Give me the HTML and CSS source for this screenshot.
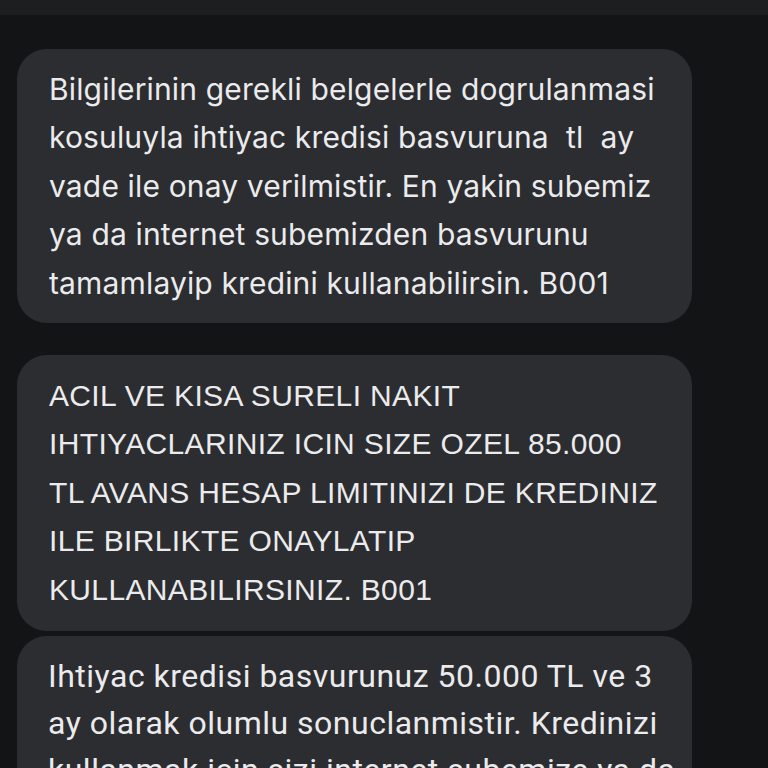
FILE: index.html
```html
<!DOCTYPE html>
<html>
<head>
<meta charset="utf-8">
<link rel="stylesheet" href="styles.css">
</head>
<body>
<div class="topbar"></div>
<div class="thread">
  <div class="bubble b1">Bilgilerinin gerekli belgelerle dogrulanmasi<br>kosuluyla ihtiyac kredisi basvuruna &nbsp;tl &nbsp;ay<br>vade ile onay verilmistir. En yakin subemiz<br>ya da internet subemizden basvurunu<br>tamamlayip kredini kullanabilirsin. B001</div>
  <div class="bubble b2">ACIL VE KISA SURELI NAKIT<br>IHTIYACLARINIZ ICIN SIZE OZEL 85.000<br>TL AVANS HESAP LIMITINIZI DE KREDINIZ<br>ILE BIRLIKTE ONAYLATIP<br>KULLANABILIRSINIZ. B001</div>
  <div class="bubble b3">Ihtiyac kredisi basvurunuz 50.000 TL ve 3<br>ay olarak olumlu sonuclanmistir. Kredinizi<br>kullanmak icin sizi internet subemize ya da<br>subelerimize bekliyoruz.</div>
</div>
</body>
</html>
```

FILE: styles.css
```css
html, body {
  margin: 0;
  padding: 0;
  background: #131416;
  height: 768px;
  overflow: hidden;
}
.topbar {
  height: 15px;
  background: #1d1e20;
}
.thread {
  display: flex;
  flex-direction: column;
  padding: 34px 0 0 17px;
}
.bubble {
  width: 675px;
  box-sizing: border-box;
  background: #2c2d30;
  color: #ebebed;
  border-radius: 30px;
  padding: 15.5px 20px 15.5px 32px;
  font-family: Inter, Roboto, "Noto Sans", sans-serif;
  font-size: 30px;
  line-height: 48.5px;
  letter-spacing: 0.15px;
  white-space: nowrap;
  overflow: hidden;
}
.b1 { margin-bottom: 32px; }
.b2 {
  font-family: "Liberation Sans", Arial, sans-serif;
  letter-spacing: 0.35px;
  padding-top: 17px;
  padding-bottom: 17px;
  margin-bottom: 5px;
}
.b3 {
  font-family: Roboto, "Noto Sans", sans-serif;
  font-size: 32px;
  line-height: 47px;
  letter-spacing: 0.5px;
  padding-top: 17px;
  padding-left: 31px;
}
```
